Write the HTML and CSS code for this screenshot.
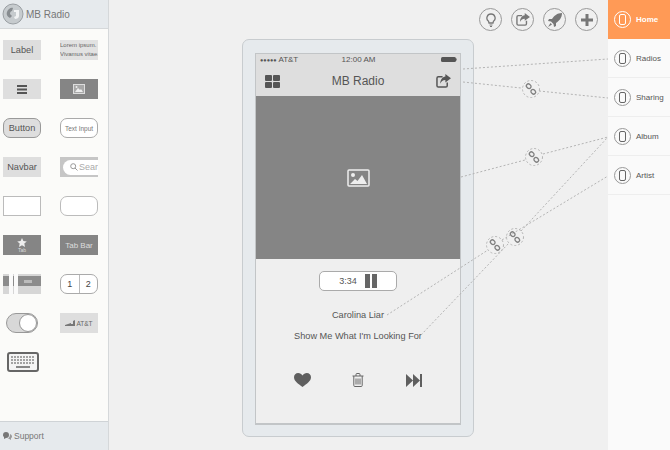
FILE: index.html
```html
<!DOCTYPE html>
<html lang="en">

<head>
    <meta charset="UTF-8">
    <title>MB Radio</title>
    <link rel="stylesheet" href="styles.css">
</head>

<body>
    <div class="app">
        <aside class="sidebar">
            <div class="side-head">
                <svg class="logo" width="22" height="22" viewBox="0 0 22 22">
                    <circle cx="11" cy="11" r="10" fill="#c6cbce" stroke="#9a9fa3"/>
                    <path d="M5 9c1-3 4-5 6-4l-1 3c-1 0-2 1-2 3l2 2-2 2c-2-1-4-3-3-6z" fill="#878c90"/>
                    <path d="M12 7h5v6c0 2-2 3-4 3l-1-2 2-1V9h-2z" fill="#f1f3f4"/>
                </svg>
                <span>MB Radio</span>
            </div>
            <div class="widgets">
                <div class="widget plain large">Label</div>
                <div class="widget lorem">Lorem ipsum.<br>Vivamus vitae.</div>
                <div class="widget plain">
                    <svg width="10" height="9" viewBox="0 0 10 9"><path d="M0 0h10v2H0zM0 3.500h10v2H0zM0 7h10v2H0z" fill="#555"/></svg>
                </div>
                <div class="widget dark">
                    <svg width="12" height="10" viewBox="0 0 12 10"><rect x=".5" y=".5" width="11" height="9" fill="#a8a8a8" stroke="#ddd"/><path d="M2 8l3-4 2 2 1-1 2 3z" fill="#eee"/><circle cx="3.500" cy="3" r="1" fill="#eee"/></svg>
                </div>
                <div class="widget button large">Button</div>
                <div class="widget input">Text Input</div>
                <div class="widget plain large">Navbar</div>
                <div class="widget search">
                    <div class="search-pill">
                        <svg width="8" height="8" viewBox="0 0 8 8"><circle cx="3.200" cy="3.200" r="2.500" fill="none" stroke="#999"/><path d="M5 5l2.500 2.500" stroke="#999"/></svg>
                        <span>Sear</span>
                    </div>
                </div>
                <div class="widget box"></div>
                <div class="widget box rounded"></div>
                <div class="widget dark tab">
                    <svg width="10" height="9" viewBox="0 0 10 9"><path d="M5 0l1.400 3 3.400.400-2.500 2.200.7 3.400L5 7.300 2 9l.7-3.400L.2 3.400 3.600 3z" fill="#eee"/></svg>
                    <span>Tab</span>
                </div>
                <div class="widget dark tabbar">Tab Bar</div>
                <div class="widget split">
                    <svg width="38" height="20" viewBox="0 0 38 20"><rect width="38" height="20" fill="#d6d6d6"/><rect y="2" width="38" height="10" fill="#8c8c8c"/><rect x="6" width="4" height="20" fill="#fafafa"/><rect x="11" width="4" height="20" fill="#fafafa"/><rect x="21" y="6" width="8" height="3" fill="#bbb"/></svg>
                </div>
                <div class="widget segmented"><span>1</span><span>2</span></div>
                <div class="switch"><div class="knob"></div></div>
                <div class="widget plain carrier">
                    <svg width="10" height="6" viewBox="0 0 10 6"><path d="M0 5h10V0L8 1v3H6V3L0 5zM0 5v1h10V5z" fill="#777"/></svg>
                    <span>AT&amp;T</span>
                </div>
                <div class="keyboard">
                    <svg width="32" height="20" viewBox="0 0 32 20"><rect x="1" y="1" width="30" height="18" rx="2" fill="#f4f4f4" stroke="#666" stroke-width="2"/><path d="M4 5h24M4 8h24M4 11h24" stroke="#888" stroke-width="1.500" stroke-dasharray="2 1"/><path d="M9 15h14" stroke="#888" stroke-width="2"/></svg>
                </div>
            </div>
            <div class="side-foot">
                <svg width="9" height="8" viewBox="0 0 9 8"><path d="M0 3c0-2 1-3 3-3s3 1 3 3-1 3-3 3L1 7V5C.3 4.500 0 4 0 3z" fill="#777"/><path d="M7 2c1.200.500 2 1.200 2 2.500 0 .8-.3 1.300-1 1.700V8L6 6.800 4.500 6.700C6 6.300 7 5 7 2z" fill="#999"/></svg>
                <span>Support</span>
            </div>
        </aside>

        <main class="canvas">
            <div class="toolbar">
                <div class="tool">
                    <svg width="10" height="14" viewBox="0 0 10 14"><path d="M5 1a4 4 0 0 0-2.500 7.200L3 10h4l.5-1.800A4 4 0 0 0 5 1z" fill="none" stroke="#777" stroke-width="1.300"/><path d="M3.500 12h3M4 13.500h2" stroke="#777" stroke-width="1.200"/></svg>
                </div>
                <div class="tool">
                    <svg width="14" height="13" viewBox="0 0 16 15"><path d="M7 3H2.500Q1 3 1 4.500v8Q1 14 2.500 14h8q1.500 0 1.500-1.500V9" fill="none" stroke="#777" stroke-width="1.600"/><path d="M10 0l6 4.500L10 9V6.500C7 6.500 5.500 8 4.500 10.500 4.500 6 7 3 10 2.700z" fill="#777"/></svg>
                </div>
                <div class="tool">
                    <svg width="14" height="14" viewBox="0 0 14 14"><path d="M14 0C9 0 6 3 4 6H1L0 8l3 .5L5.500 11l.5 3 2-1v-3c3-2 6-5 6-10z" fill="#777"/><path d="M2.500 10L0 14l4-2.500z" fill="#777"/></svg>
                </div>
                <div class="tool">
                    <svg width="12" height="12" viewBox="0 0 12 12"><path d="M4.500 0h3v4.500H12v3H7.500V12h-3V7.500H0v-3h4.500z" fill="#777"/></svg>
                </div>
            </div>

            <div class="phone">
                <div class="screen">
                    <div class="status">
                        <span class="carrier-name"><i class="dots">●●●●●</i> AT&amp;T</span>
                        <span class="clock">12:00 AM</span>
                        <svg class="battery" width="16" height="5" viewBox="0 0 16 5"><rect width="15" height="5" rx="1.500" fill="#555"/><rect x="15" y="1.500" width="1" height="2" fill="#888"/></svg>
                    </div>
                    <div class="navbar">
                        <svg width="15" height="13" viewBox="0 0 15 13"><path d="M1 0h5q1 0 1 1v4q0 1-1 1H1Q0 6 0 5V1q0-1 1-1zM9 0h5q1 0 1 1v4q0 1-1 1H9Q8 6 8 5V1q0-1 1-1zM1 7h5q1 0 1 1v4q0 1-1 1H1q-1 0-1-1V8q0-1 1-1zM9 7h5q1 0 1 1v4q0 1-1 1H9q-1 0-1-1V8q0-1 1-1z" fill="#555"/></svg>
                        <span class="nav-title">MB Radio</span>
                        <svg width="15" height="14" viewBox="0 0 16 15"><path d="M7 3H2.500Q1 3 1 4.500v8Q1 14 2.500 14h8q1.500 0 1.500-1.500V9" fill="none" stroke="#555" stroke-width="1.600"/><path d="M10 0l6 4.500L10 9V6.500C7 6.500 5.500 8 4.500 10.500 4.500 6 7 3 10 2.700z" fill="#555"/></svg>
                    </div>
                    <div class="hero">
                        <svg width="23" height="18" viewBox="0 0 23 18"><rect x="1" y="1" width="21" height="16" rx="1" fill="none" stroke="#eee" stroke-width="1.500"/><circle cx="6" cy="6" r="2" fill="#eee"/><path d="M3 15l5-5 2.500 2L15 6l5 9z" fill="#eee"/></svg>
                    </div>
                    <div class="player">
                        <div class="timer">
                            <span>3:34</span>
                            <div class="pause"><i></i><i></i></div>
                        </div>
                        <div class="artist">Carolina Liar</div>
                        <div class="song">Show Me What I'm Looking For</div>
                        <div class="controls">
                            <div class="control">
                                <svg width="17" height="14" viewBox="0 0 17 14"><path d="M8.500 14C4 10.500 0 8 0 4.200 0 1.800 1.800 0 4.200 0c1.800 0 3.300 1 4.300 2.600C9.500 1 11 0 12.800 0 15.200 0 17 1.800 17 4.200 17 8 13 10.500 8.500 14z" fill="#5f5f5f"/></svg>
                            </div>
                            <div class="control">
                                <svg width="12" height="14" viewBox="0 0 12 14"><path d="M.5 3h11M4 3V1.500q0-1 1-1h2q1 0 1 1V3M1.800 3v9.500q0 1 1 1h6.400q1 0 1-1V3" fill="none" stroke="#666"/><path d="M4 5.500v6M6 5.500v6M8 5.500v6" stroke="#666"/></svg>
                            </div>
                            <div class="control">
                                <svg width="16" height="13" viewBox="0 0 16 13"><path d="M0 0l7 6.500L0 13zM7 0l7 6.500L7 13z" fill="#5f5f5f"/><rect x="14" width="2" height="13" fill="#5f5f5f"/></svg>
                            </div>
                        </div>
                    </div>
                </div>
            </div>

            <!-- links between screen items and the page list, coords are page coords -->
            <svg class="links" width="499" height="450" viewBox="109 0 499 450">
                <defs>
                    <g id="chain" fill="none" stroke="#808080" stroke-width="1.300">
                        <rect x="-4.800" y="-4.800" width="5" height="4" rx="2" transform="rotate(45 -2.300 -2.800)"/>
                        <rect x="-.2" y=".8" width="5" height="4" rx="2" transform="rotate(45 2.300 2.800)"/>
                    </g>
                </defs>
                <g fill="none" stroke="#b4b4b4" stroke-dasharray="2 2">
                    <path d="M463 69L608 59"/>
                    <path d="M463 82L521 88M539 91L608 98"/>
                    <path d="M461 177L525 160M543 154L608 137"/>
                    <path d="M387 315L488 250M502 240L608 176"/>
                    <path d="M421 335L509 243M521 231L608 137"/>
                    <circle cx="531" cy="89" r="8.500"/>
                    <circle cx="534" cy="157" r="8.500"/>
                    <circle cx="495" cy="245" r="8.500"/>
                    <circle cx="515" cy="237" r="8.500"/>
                </g>
                <use href="#chain" x="531" y="89"/>
                <use href="#chain" x="534" y="157"/>
                <use href="#chain" x="495" y="245"/>
                <use href="#chain" x="515" y="237"/>
            </svg>
        </main>

        <nav class="pages">
            <div class="page active">
                <div class="page-icon"><i></i></div>
                <span>Home</span>
            </div>
            <div class="page">
                <div class="page-icon"><i></i></div>
                <span>Radios</span>
            </div>
            <div class="page">
                <div class="page-icon"><i></i></div>
                <span>Sharing</span>
            </div>
            <div class="page">
                <div class="page-icon"><i></i></div>
                <span>Album</span>
            </div>
            <div class="page">
                <div class="page-icon"><i></i></div>
                <span>Artist</span>
            </div>
        </nav>
    </div>
</body>

</html>
```
FILE: styles.css
```css
html,
body {
    margin: 0;
    padding: 0;
    height: 450px;
    overflow: hidden;
    font-family: "Liberation Sans", Arial, sans-serif;
    color: #555;
}

.app {
    display: flex;
    width: 670px;
    height: 450px;
    background-color: #f0f0f0;
}

/* left widget list */
.sidebar {
    width: 109px;
    flex: none;
    display: flex;
    flex-direction: column;
    box-sizing: border-box;
    background-color: #fbfbf9;
    border-right: 1px solid #d5d8da;
}

.side-head {
    height: 29px;
    flex: none;
    display: flex;
    align-items: center;
    gap: 2px;
    padding-left: 2px;
    box-sizing: border-box;
    background-color: #e6eaed;
    border-bottom: 1px solid #d5d8da;
    font-size: 10px;
    color: #777;
}

.widgets {
    flex: 1;
    display: grid;
    grid-template-columns: 38px 38px;
    grid-auto-rows: 19px;
    column-gap: 19px;
    row-gap: 20px;
    padding: 11px 0 0 3px;
}

.widget {
    display: flex;
    align-items: center;
    justify-content: center;
    box-sizing: border-box;
    height: 20px;
    overflow: hidden;
    font-size: 6.500px;
}

.plain {
    background-color: #dedede;
}

.large {
    font-size: 9.200px;
    color: #555;
}

.lorem {
    display: block;
    background-color: #e2e2e2;
    font-size: 6px;
    line-height: 9px;
    padding-top: 1px;
    white-space: nowrap;
    color: #666;
}

.dark {
    background-color: #858585;
    color: #ddd;
}

.button {
    background-color: #dedede;
    border: 1px solid #999;
    border-radius: 7px;
}

.input {
    background-color: #fff;
    border: 1px solid #aaa;
    border-radius: 7px;
    color: #777;
}

.search {
    background-color: #c6c6c6;
    justify-content: flex-start;
    padding: 2px 0 2px 3px;
}

.search-pill {
    flex: 1;
    height: 15px;
    display: flex;
    align-items: center;
    gap: 1px;
    padding-left: 7px;
    background-color: #fff;
    border-radius: 8px 0 0 8px;
    font-size: 9px;
    color: #aaa;
}

.search-pill svg {
    flex: none;
}

.box {
    background-color: #fff;
    border: 1px solid #bbb;
}

.rounded {
    border-radius: 7px;
}

.tab {
    flex-direction: column;
    font-size: 5px;
}

.tabbar {
    font-size: 8px;
}

.split {
    display: block;
}

.split svg,
.keyboard svg,
.side-head svg {
    display: block;
}

.segmented {
    background-color: #fff;
    border: 1px solid #aaa;
    border-radius: 7px;
    font-size: 9px;
    color: #444;
}

.segmented span {
    flex: 1;
    text-align: center;
    line-height: 18px;
}

.segmented span + span {
    border-left: 1px solid #bbb;
}

.switch {
    width: 32px;
    height: 20px;
    margin-left: 3px;
    display: flex;
    justify-content: flex-end;
    box-sizing: border-box;
    background-color: #d8d8d8;
    border: 1px solid #999;
    border-radius: 10px;
}

.knob {
    width: 18px;
    height: 18px;
    box-sizing: border-box;
    background-color: #fff;
    border: 1px solid #999;
    border-radius: 50%;
}

.carrier {
    gap: 1px;
    font-size: 6.500px;
    color: #666;
}

.keyboard {
    margin-left: 4px;
}

.side-foot {
    height: 29px;
    flex: none;
    display: flex;
    align-items: center;
    gap: 2px;
    padding-left: 3px;
    box-sizing: border-box;
    background-color: #e6eaed;
    border-top: 1px solid #cfd3d6;
    font-size: 8.500px;
    color: #777;
}

/* middle canvas */
.canvas {
    position: relative;
    flex: 1;
    min-width: 0;
}

.toolbar {
    height: 39px;
    display: flex;
    align-items: flex-start;
    justify-content: flex-end;
    gap: 9px;
    padding: 8px 10px 0 0;
    box-sizing: border-box;
}

.tool {
    width: 23px;
    height: 23px;
    display: flex;
    align-items: center;
    justify-content: center;
    box-sizing: border-box;
    border: 1px solid #999;
    border-radius: 50%;
}

.phone {
    width: 232px;
    height: 398px;
    margin-left: 133px;
    padding: 13px 12px 11px 12px;
    box-sizing: border-box;
    background-color: #e6eaed;
    border: 1px solid #c8cccf;
    border-radius: 7px;
}

.screen {
    height: 100%;
    display: flex;
    flex-direction: column;
    box-sizing: border-box;
    background-color: #efefef;
    border: 1px solid #c2c5c7;
    border-bottom-width: 2px;
}

.status {
    height: 11px;
    flex: none;
    display: grid;
    grid-template-columns: 1fr auto 1fr;
    align-items: center;
    padding: 0 3px 0 4px;
    background-color: #dedede;
    font-size: 8px;
    color: #555;
}

.dots {
    font-style: normal;
    font-size: 5.500px;
}

.battery {
    justify-self: end;
}

.navbar {
    height: 31px;
    flex: none;
    display: flex;
    align-items: center;
    justify-content: space-between;
    padding: 1px 9px 0;
    box-sizing: border-box;
    background-color: #dedede;
}

.nav-title {
    font-size: 12px;
    color: #555;
}

.hero {
    height: 163px;
    flex: none;
    display: flex;
    align-items: center;
    justify-content: center;
    background-color: #858585;
}

.player {
    flex: 1;
    display: flex;
    flex-direction: column;
    align-items: center;
    padding-top: 12px;
}

.timer {
    width: 78px;
    height: 20px;
    display: flex;
    align-items: center;
    justify-content: center;
    gap: 8px;
    box-sizing: border-box;
    background-color: #fff;
    border: 1px solid #aaa;
    border-radius: 5px;
    font-size: 9px;
}

.pause {
    display: flex;
    gap: 2px;
}

.pause i {
    display: block;
    width: 5px;
    height: 14px;
    background-color: #666;
}

.artist,
.song {
    font-size: 9.200px;
    line-height: 12px;
    color: #555;
}

.artist {
    margin-top: 18px;
}

.song {
    margin-top: 9px;
}

.controls {
    display: flex;
    margin-top: 30px;
}

.control {
    width: 56px;
    height: 16px;
    display: flex;
    align-items: center;
    justify-content: center;
}

.links {
    position: absolute;
    top: 0;
    left: 0;
    pointer-events: none;
}

/* right page list */
.pages {
    width: 62px;
    flex: none;
    background-color: #fafafa;
}

.page {
    height: 39px;
    display: flex;
    align-items: center;
    gap: 5px;
    padding-left: 6px;
    box-sizing: border-box;
    border-bottom: 1px solid #eeeeee;
    font-size: 8px;
    color: #555;
}

.page-icon {
    width: 17px;
    height: 17px;
    flex: none;
    display: flex;
    align-items: center;
    justify-content: center;
    box-sizing: border-box;
    border: 1px solid #999;
    border-radius: 50%;
}

.page-icon i {
    display: block;
    width: 7px;
    height: 11px;
    box-sizing: border-box;
    border: 1.500px solid #666;
    border-radius: 2px;
}

.active {
    background-color: #ff9a56;
    border-bottom: none;
    color: #fff;
    font-weight: bold;
}

.active .page-icon {
    border-color: #fff;
}

.active .page-icon i {
    border-color: #fff;
}
```
